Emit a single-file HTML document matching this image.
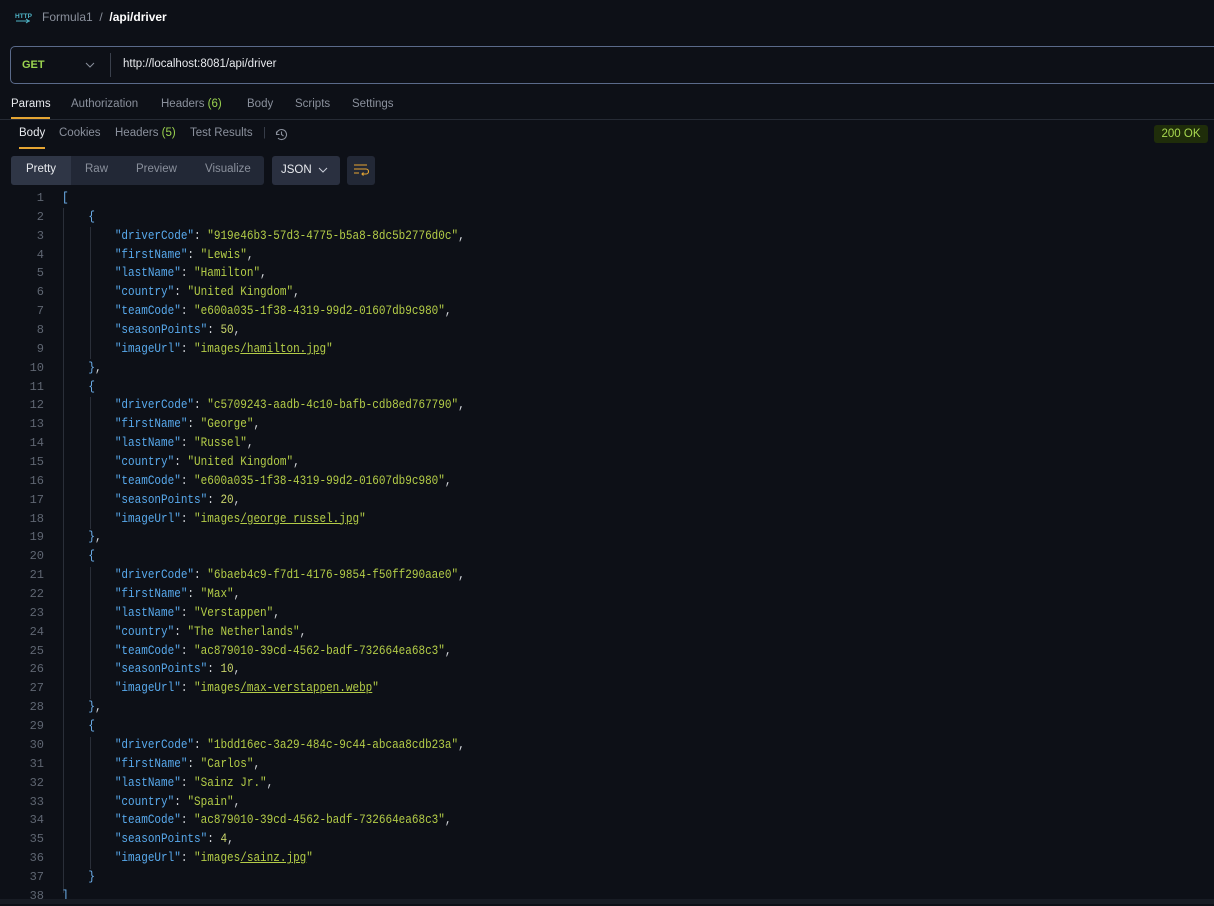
<!DOCTYPE html>
<html><head><meta charset="utf-8"><style>
*{margin:0;padding:0;box-sizing:border-box}
body{width:1214px;height:904px;background:#0d1017;font-family:"Liberation Sans",sans-serif;color:#c9ced8;position:relative;overflow:hidden;font-size:11.5px}
.a{position:absolute;white-space:nowrap}
.code{position:absolute;left:0;top:189px;width:1214px;font-family:"Liberation Mono",monospace;font-size:12.5px}
.ln{height:18.87px;line-height:18.87px;position:relative}
.n{position:absolute;left:0;width:44px;text-align:right;color:#5f6672;font-size:12px}
.t{position:absolute;left:62px;color:#d6d9de;white-space:pre;transform:scaleX(0.88);transform-origin:0 50%}
.k{color:#58a9ec}.s{color:#b3cc47}.v{color:#c8d46a}
.u{text-decoration:underline;text-decoration-color:#b3cc47}
.br{color:#6fb3f0}
</style></head><body>
<svg class="a" style="left:14px;top:10px" width="18" height="14" viewBox="0 0 18 14"><text x="1" y="8" font-family="Liberation Sans" font-size="6.5" font-weight="bold" fill="#4fb6c9">HTTP</text><path d="M2 11h14M12 9l3 2-3 2" stroke="#4fb6c9" fill="none" stroke-width="1"/></svg>
<div class="a" style="left:42px;top:10px;font-size:12px;color:#8a909c">Formula1 &nbsp;/&nbsp; <b style="color:#fff">/api/driver</b></div>
<div class="a" style="left:10px;top:46px;width:1210px;height:38px;border:1px solid #5a6a8a;border-radius:5px"></div>
<div class="a" style="left:22px;top:59px;font-size:11px;font-weight:bold;color:#9bd34f">GET</div>
<svg class="a" style="left:85px;top:62px" width="10" height="7"><path d="M1 1l4 4 4-4" stroke="#8a909c" fill="none"/></svg>
<div class="a" style="left:110px;top:53px;width:1px;height:24px;background:#3a404c"></div>
<div class="a" style="left:123px;top:58px;font-size:11.5px;color:#e8eaee">http://localhost:8081/api/driver</div>
<div class="a" style="top:98px;left:11px;color:#8a909c">
<span style="color:#e8eaee;position:absolute;left:0">Params</span>
<span style="position:absolute;left:60px">Authorization</span>
<span style="position:absolute;left:150px">Headers <span style="color:#9bd34f">(6)</span></span>
<span style="position:absolute;left:236px">Body</span>
<span style="position:absolute;left:284px">Scripts</span>
<span style="position:absolute;left:341px">Settings</span></div>
<div class="a" style="left:11px;top:117px;width:39px;height:2px;background:#e5a533"></div>
<div class="a" style="left:0;top:119px;width:1214px;height:1px;background:#262b35"></div>
<div class="a" style="top:127px;left:19px;color:#8a909c">
<span style="color:#e8eaee;position:absolute;left:0">Body</span>
<span style="position:absolute;left:40px">Cookies</span>
<span style="position:absolute;left:96px">Headers <span style="color:#9bd34f">(5)</span></span>
<span style="position:absolute;left:171px">Test Results</span>
<span style="position:absolute;left:244px;color:#3a404c">|</span></div>
<svg class="a" style="left:274px;top:127px" width="15" height="15" viewBox="0 0 15 15"><path d="M2.5 7.5a5 5 0 1 1 1.5 3.6M2.5 4.5v3h3M7.5 4.5v3l2 1.5" stroke="#8a909c" fill="none" stroke-width="1.1"/></svg>
<div class="a" style="left:19px;top:147px;width:26px;height:2px;background:#e5a533"></div>
<div class="a" style="left:1154px;top:125px;width:54px;height:18px;border-radius:3px;background:#1f2d0a;color:#a8d94f;font-size:11.5px;text-align:center;line-height:18px">200 OK</div>
<div class="a" style="left:11px;top:156px;width:253px;height:29px;border-radius:3px;background:#222836"></div>
<div class="a" style="left:11px;top:156px;width:60px;height:29px;border-radius:3px 0 0 3px;background:#2f3646"></div>
<div class="a" style="top:163px;left:26px;color:#e8eaee">Pretty</div>
<div class="a" style="top:163px;left:85px;color:#8a909c">Raw</div>
<div class="a" style="top:163px;left:136px;color:#8a909c">Preview</div>
<div class="a" style="top:163px;left:205px;color:#8a909c">Visualize</div>
<div class="a" style="left:272px;top:156px;width:68px;height:29px;border-radius:3px;background:#2a3040"></div>
<div class="a" style="top:164px;left:281px;color:#e8eaee">JSON</div>
<svg class="a" style="left:318px;top:167px" width="10" height="7"><path d="M1 1l4 4 4-4" stroke="#c9ced8" fill="none"/></svg>
<div class="a" style="left:347px;top:156px;width:28px;height:29px;border-radius:3px;background:#222836"></div>
<svg class="a" style="left:353px;top:163px" width="16" height="14" viewBox="0 0 16 14"><path d="M1 2h13M1 6h12a2.5 2.5 0 0 1 0 5H9M10.5 9.5L9 11l1.5 1.5M1 10h5" stroke="#e5a533" fill="none" stroke-width="1.1"/></svg>
<div class="a" style="left:63px;top:208px;width:1px;height:685px;background:#2a2f39"></div>
<div class="a" style="left:90px;top:227px;width:1px;height:132px;background:#2a2f39"></div>
<div class="a" style="left:90px;top:397px;width:1px;height:132px;background:#2a2f39"></div>
<div class="a" style="left:90px;top:567px;width:1px;height:132px;background:#2a2f39"></div>
<div class="a" style="left:90px;top:737px;width:1px;height:132px;background:#2a2f39"></div>
<div class="code">
<div class="ln"><span class="n">1</span><span class="t br">[</span></div>
<div class="ln"><span class="n">2</span><span class="t">    <span class="br">{</span></span></div>
<div class="ln"><span class="n">3</span><span class="t">        <span class="k">"driverCode"</span>: <span class="s">"919e46b3-57d3-4775-b5a8-8dc5b2776d0c"</span>,</span></div>
<div class="ln"><span class="n">4</span><span class="t">        <span class="k">"firstName"</span>: <span class="s">"Lewis"</span>,</span></div>
<div class="ln"><span class="n">5</span><span class="t">        <span class="k">"lastName"</span>: <span class="s">"Hamilton"</span>,</span></div>
<div class="ln"><span class="n">6</span><span class="t">        <span class="k">"country"</span>: <span class="s">"United Kingdom"</span>,</span></div>
<div class="ln"><span class="n">7</span><span class="t">        <span class="k">"teamCode"</span>: <span class="s">"e600a035-1f38-4319-99d2-01607db9c980"</span>,</span></div>
<div class="ln"><span class="n">8</span><span class="t">        <span class="k">"seasonPoints"</span>: <span class="v">50</span>,</span></div>
<div class="ln"><span class="n">9</span><span class="t">        <span class="k">"imageUrl"</span>: <span class="s">"images<span class="u">/hamilton.jpg</span>"</span></span></div>
<div class="ln"><span class="n">10</span><span class="t">    <span class="br">}</span>,</span></div>
<div class="ln"><span class="n">11</span><span class="t">    <span class="br">{</span></span></div>
<div class="ln"><span class="n">12</span><span class="t">        <span class="k">"driverCode"</span>: <span class="s">"c5709243-aadb-4c10-bafb-cdb8ed767790"</span>,</span></div>
<div class="ln"><span class="n">13</span><span class="t">        <span class="k">"firstName"</span>: <span class="s">"George"</span>,</span></div>
<div class="ln"><span class="n">14</span><span class="t">        <span class="k">"lastName"</span>: <span class="s">"Russel"</span>,</span></div>
<div class="ln"><span class="n">15</span><span class="t">        <span class="k">"country"</span>: <span class="s">"United Kingdom"</span>,</span></div>
<div class="ln"><span class="n">16</span><span class="t">        <span class="k">"teamCode"</span>: <span class="s">"e600a035-1f38-4319-99d2-01607db9c980"</span>,</span></div>
<div class="ln"><span class="n">17</span><span class="t">        <span class="k">"seasonPoints"</span>: <span class="v">20</span>,</span></div>
<div class="ln"><span class="n">18</span><span class="t">        <span class="k">"imageUrl"</span>: <span class="s">"images<span class="u">/george_russel.jpg</span>"</span></span></div>
<div class="ln"><span class="n">19</span><span class="t">    <span class="br">}</span>,</span></div>
<div class="ln"><span class="n">20</span><span class="t">    <span class="br">{</span></span></div>
<div class="ln"><span class="n">21</span><span class="t">        <span class="k">"driverCode"</span>: <span class="s">"6baeb4c9-f7d1-4176-9854-f50ff290aae0"</span>,</span></div>
<div class="ln"><span class="n">22</span><span class="t">        <span class="k">"firstName"</span>: <span class="s">"Max"</span>,</span></div>
<div class="ln"><span class="n">23</span><span class="t">        <span class="k">"lastName"</span>: <span class="s">"Verstappen"</span>,</span></div>
<div class="ln"><span class="n">24</span><span class="t">        <span class="k">"country"</span>: <span class="s">"The Netherlands"</span>,</span></div>
<div class="ln"><span class="n">25</span><span class="t">        <span class="k">"teamCode"</span>: <span class="s">"ac879010-39cd-4562-badf-732664ea68c3"</span>,</span></div>
<div class="ln"><span class="n">26</span><span class="t">        <span class="k">"seasonPoints"</span>: <span class="v">10</span>,</span></div>
<div class="ln"><span class="n">27</span><span class="t">        <span class="k">"imageUrl"</span>: <span class="s">"images<span class="u">/max-verstappen.webp</span>"</span></span></div>
<div class="ln"><span class="n">28</span><span class="t">    <span class="br">}</span>,</span></div>
<div class="ln"><span class="n">29</span><span class="t">    <span class="br">{</span></span></div>
<div class="ln"><span class="n">30</span><span class="t">        <span class="k">"driverCode"</span>: <span class="s">"1bdd16ec-3a29-484c-9c44-abcaa8cdb23a"</span>,</span></div>
<div class="ln"><span class="n">31</span><span class="t">        <span class="k">"firstName"</span>: <span class="s">"Carlos"</span>,</span></div>
<div class="ln"><span class="n">32</span><span class="t">        <span class="k">"lastName"</span>: <span class="s">"Sainz Jr."</span>,</span></div>
<div class="ln"><span class="n">33</span><span class="t">        <span class="k">"country"</span>: <span class="s">"Spain"</span>,</span></div>
<div class="ln"><span class="n">34</span><span class="t">        <span class="k">"teamCode"</span>: <span class="s">"ac879010-39cd-4562-badf-732664ea68c3"</span>,</span></div>
<div class="ln"><span class="n">35</span><span class="t">        <span class="k">"seasonPoints"</span>: <span class="v">4</span>,</span></div>
<div class="ln"><span class="n">36</span><span class="t">        <span class="k">"imageUrl"</span>: <span class="s">"images<span class="u">/sainz.jpg</span>"</span></span></div>
<div class="ln"><span class="n">37</span><span class="t">    <span class="br">}</span></span></div>
<div class="ln"><span class="n">38</span><span class="t br">]</span></div>
</div>
<div class="a" style="left:0;top:899px;width:1214px;height:5px;background:#181c24"></div>
</body></html>
